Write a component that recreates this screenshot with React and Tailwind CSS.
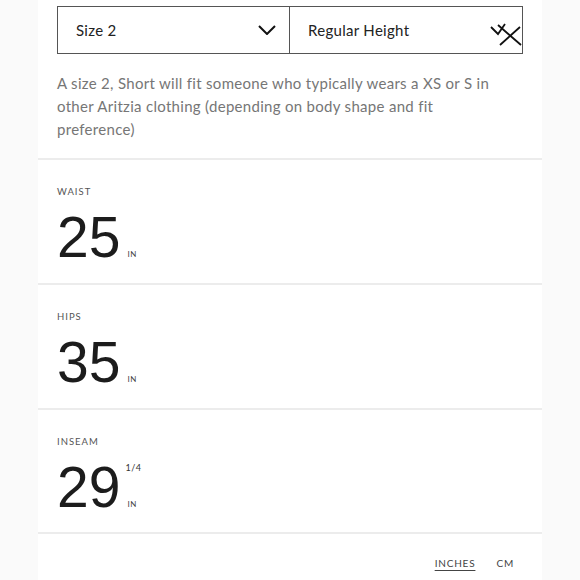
import React from "react";

const Chevron = ({ className }) => (
  <svg className={className} width="18" height="10" viewBox="0 0 18 10" fill="none">
    <path d="M1 1 L9 9 L17 1" stroke="#111" strokeWidth="2" />
  </svg>
);

function Measure({ label, value, fraction, last }) {
  return (
    <div className={"border-t-2 border-[#ececec] pt-[26px] px-[19px] " + (last ? "pb-[16px]" : "pb-[17px]")}>
      <div className="text-[9.5px] leading-[12px] tracking-[1px] text-[#555]" style={{ fontFamily: "Lato, sans-serif" }}>
        {label}
      </div>
      <div className="mt-[11px] flex items-baseline">
        <span className="text-[57px] leading-[57px] text-[#1c1c1c]" style={{ fontFamily: "'Liberation Sans', Arial, sans-serif" }}>
          {value}
        </span>
        <span className="relative ml-[7px] text-[8px] tracking-[0.5px] text-[#444]" style={{ fontFamily: "Lato, sans-serif" }}>
          {fraction && (
            <span className="absolute left-[-2px] top-[-37px] text-[9px] text-[#333]">{fraction}</span>
          )}
          IN
        </span>
      </div>
    </div>
  );
}

export default function App() {
  return (
    <div className="w-full h-[580px] bg-[#fafafa] overflow-hidden" style={{ fontFamily: "Lato, sans-serif" }}>
      <div className="mx-auto w-[504px] h-[580px] bg-white">
        <div className="pt-[6px] px-[19px]">
          <div className="flex h-[48px] border-[1.5px] border-[#555]">
            <div className="w-[232px] flex items-center justify-between pl-[18px] pr-[13px] border-r-[1.5px] border-[#555]">
              <span className="text-[15px] tracking-[0.3px] text-[#222]">Size 2</span>
              <Chevron />
            </div>
            <div className="flex-1 relative flex items-center pl-[18px]">
              <span className="text-[15px] tracking-[0.3px] text-[#222]">Regular Height</span>
              <svg className="absolute right-[0px] top-[16px]" width="32" height="24" viewBox="0 0 32 24" fill="none">
                <path d="M1 4 L8 11 L15 1" stroke="#111" strokeWidth="1.8" />
                <path d="M8 2 L31 22 M30 4 L10 22" stroke="#111" strokeWidth="1.8" />
              </svg>
            </div>
          </div>
          <p className="mt-[18px] pb-[17px] pr-[20px] text-[15px] leading-[23px] tracking-[0.3px] text-[#767676]">
            A size 2, Short will fit someone who typically wears a XS or S in other Aritzia clothing (depending on body shape and fit preference)
          </p>
        </div>
        <Measure label="WAIST" value="25" />
        <Measure label="HIPS" value="35" />
        <Measure label="INSEAM" value="29" fraction="1/4" last />
        <div className="border-t-2 border-[#ececec] flex justify-end gap-[21px] pr-[28px] pt-[22px] text-[10px] tracking-[0.8px] text-[#444]">
          <span className="underline underline-offset-[3px]">INCHES</span>
          <span>CM</span>
        </div>
      </div>
    </div>
  );
}
